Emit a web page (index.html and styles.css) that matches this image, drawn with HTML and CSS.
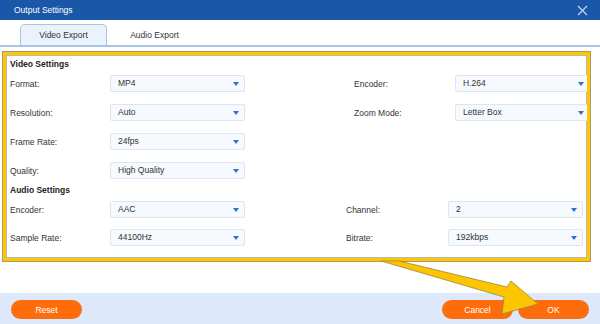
FILE: index.html
```html
<!DOCTYPE html>
<html>
<head>
	<title>Output Settings</title>
	<link rel="stylesheet" href="styles.css">
</head>
<body>
	<div class="dialog">
		<header class="titlebar">
			<span class="title">Output Settings</span>
			<svg class="close" width="11" height="11" viewBox="0 0 11 11"><path d="M1 1L10 10M10 1L1 10" stroke="#c6d6ee" stroke-width="1.2" fill="none"/></svg>
		</header>

		<nav class="tabs">
			<div class="tab active">Video Export</div>
			<div class="tab">Audio Export</div>
		</nav>

		<section class="panel">
			<h2>Video Settings</h2>
			<div class="row">
				<div class="field"><label>Format:</label><div class="select">MP4</div></div>
				<div class="field side video"><label>Encoder:</label><div class="select">H.264</div></div>
			</div>
			<div class="row">
				<div class="field"><label>Resolution:</label><div class="select">Auto</div></div>
				<div class="field side video"><label>Zoom Mode:</label><div class="select">Letter Box</div></div>
			</div>
			<div class="row">
				<div class="field"><label>Frame Rate:</label><div class="select">24fps</div></div>
			</div>
			<div class="row">
				<div class="field"><label>Quality:</label><div class="select">High Quality</div></div>
			</div>

			<h2>Audio Settings</h2>
			<div class="row audio">
				<div class="field"><label>Encoder:</label><div class="select">AAC</div></div>
				<div class="field side"><label>Channel:</label><div class="select">2</div></div>
			</div>
			<div class="row audio">
				<div class="field"><label>Sample Rate:</label><div class="select">44100Hz</div></div>
				<div class="field side"><label>Bitrate:</label><div class="select">192kbps</div></div>
			</div>
		</section>

		<footer class="actions">
			<button class="btn">Reset</button>
			<span class="spacer"></span>
			<button class="btn">Cancel</button>
			<button class="btn">OK</button>
		</footer>

		<!-- annotation arrow pointing at OK -->
		<svg class="pointer" width="600" height="324" viewBox="0 0 600 324">
			<polygon points="381,261 399,261 507,287 511,281 538,304 502,314 504,297" fill="#fcc500" stroke="#9c8740" stroke-width="0.8" stroke-linejoin="round"/>
		</svg>
	</div>
</body>
</html>
```

FILE: styles.css
```css
* { box-sizing: border-box; }
html, body { margin: 0; padding: 0; }
body { font-family: "Liberation Sans", Arial, sans-serif; font-size: 8.5px; color: #333; background: #fff; }

.dialog { position: relative; width: 600px; height: 324px; overflow: hidden; background: #fff; }

/* title bar */
.titlebar { height: 20px; background: #1a57a8; display: flex; align-items: center; justify-content: space-between; padding: 0 12px 0 14px; }
.title { color: #fff; font-size: 8.5px; }
.close { display: block; }

/* tabs */
.tabs { height: 27px; display: flex; align-items: flex-end; gap: 4px; padding-left: 20px; border-bottom: 2px solid #aac2e4; }
.tab { width: 87px; height: 21px; display: flex; align-items: center; justify-content: center; color: #333; }
.tab.active { background: #eaf2fc; border: 1px solid #aac2e4; border-bottom: 0; border-radius: 5px 5px 0 0; }

/* settings panel (highlighted) */
.panel { margin: 5px 0 0 3px; width: 587px; height: 209px; border: 3px solid #fcc600; box-shadow: 0 0 0 1px #a89a6a, inset 0 0 0 1px #b9b9b9; padding: 2px 0 0 4px; overflow: hidden; }
.panel h2 { margin: 0; font-size: 8.5px; font-weight: bold; line-height: 14px; color: #222; }
.panel h2 + .row { margin-top: 4px; }
.panel .row + h2 { margin-top: 4px; }

.row { display: flex; height: 17px; margin-top: 12px; }
.row.audio + .row.audio { margin-top: 11px; }
.field { display: flex; align-items: center; }
.field label { width: 100px; }
.field.side { margin-left: 101px; }
.field.side.video { margin-left: 109px; }
.field.side label { width: 102px; }
.field.side.video label { width: 101px; }

.select { position: relative; width: 135px; height: 17px; line-height: 15px; padding-left: 7px; background: #f6f9fd; border: 1px solid #dde5f0; border-radius: 2px; color: #333; }
.select::after { content: ""; position: absolute; right: 5px; top: 6px; border-left: 3px solid transparent; border-right: 3px solid transparent; border-top: 4px solid #2f6fd2; }

/* footer */
.actions { margin-top: 32px; height: 33px; background: #dde9fa; display: flex; align-items: center; gap: 5px; padding: 0 11px; }
.spacer { flex: 1; }
.btn { width: 71px; height: 19px; border: 0; border-radius: 10px; background: #fe6c0b; color: #fff; font-family: "Liberation Sans", Arial, sans-serif; font-size: 8.5px; padding: 0; }

.pointer { position: absolute; left: 0; top: 0; pointer-events: none; }
```
